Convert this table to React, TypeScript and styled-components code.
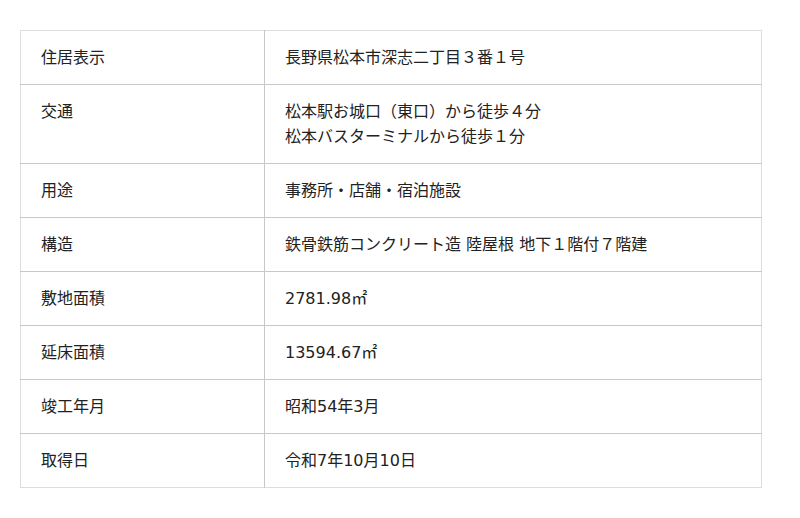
import React from 'react'
import styled, { createGlobalStyle } from 'styled-components'

const GlobalStyle = createGlobalStyle`
  body {
    margin: 0;
    background: #fff;
    font-family: "DejaVu Sans", "Noto Sans CJK JP", sans-serif;
    color: #222;
  }
`

const Wrapper = styled.div`
  padding: 30px 20px;
`

const Table = styled.table`
  width: 742px;
  border-collapse: collapse;
  border: 1px solid #ddd;
  font-size: 16px;
  line-height: 25px;
`

const Row = styled.tr`
  border-top: 1px solid #c8c8c8;
  &:first-child {
    border-top: none;
  }
`

const Head = styled.th`
  width: 203px;
  padding: 14px 20px;
  text-align: left;
  font-weight: normal;
  vertical-align: top;
  border-right: 1px solid #c8c8c8;
`

const Cell = styled.td`
  padding: 14px 20px;
  vertical-align: top;
`

const rows: [string, string[]][] = [
  ['住居表示', ['長野県松本市深志二丁目３番１号']],
  ['交通', ['松本駅お城口（東口）から徒歩４分', '松本バスターミナルから徒歩１分']],
  ['用途', ['事務所・店舗・宿泊施設']],
  ['構造', ['鉄骨鉄筋コンクリート造 陸屋根 地下１階付７階建']],
  ['敷地面積', ['2781.98㎡']],
  ['延床面積', ['13594.67㎡']],
  ['竣工年月', ['昭和54年3月']],
  ['取得日', ['令和7年10月10日']],
]

export default function App() {
  return (
    <>
      <GlobalStyle />
      <Wrapper>
        <Table>
          <tbody>
            {rows.map(([label, lines]) => (
              <Row key={label}>
                <Head>{label}</Head>
                <Cell>
                  {lines.map((l, i) => (
                    <div key={i}>{l}</div>
                  ))}
                </Cell>
              </Row>
            ))}
          </tbody>
        </Table>
      </Wrapper>
    </>
  )
}
